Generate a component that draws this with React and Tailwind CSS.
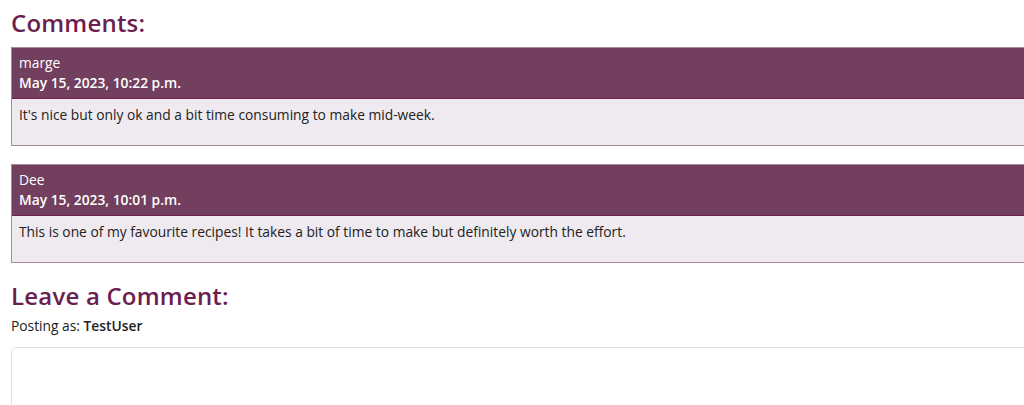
const comments = [
  {
    author: "marge",
    date: "May 15, 2023, 10:22 p.m.",
    body: "It's nice but only ok and a bit time consuming to make mid-week.",
  },
  {
    author: "Dee",
    date: "May 15, 2023, 10:01 p.m.",
    body: "This is one of my favourite recipes! It takes a bit of time to make but definitely worth the effort.",
  },
];

const App = () => {
  return (
    <div className="w-[1024px] h-[405px] overflow-hidden bg-white font-['Open_Sans',sans-serif] text-[13.8px] text-[#222]">
      <div className="w-[1100px] pl-[11px]">
        <h3 className="pt-[8px] pb-[9px] text-[24px] leading-[30px] font-semibold tracking-[0.2px] text-[#6b1e4f]">
          Comments:
        </h3>
        {comments.map((c) => (
          <div key={c.author} className="mb-[18px] border border-[#a58a9b]">
            <div className="bg-[#733f5e] text-white px-[7px] py-[5px] leading-[20px] border-b border-[#6b1e4f]">
              <p className="font-medium">{c.author}</p>
              <p className="font-semibold">{c.date}</p>
            </div>
            <div className="bg-[#efeaef] px-[7px] pt-[6px] pb-[20px] leading-[20px]">
              <p>{c.body}</p>
            </div>
          </div>
        ))}
        <h3 className="pb-[5px] text-[24px] leading-[30px] font-semibold tracking-[0.2px] text-[#6b1e4f]">
          Leave a Comment:
        </h3>
        <p className="leading-[20px]">
          Posting as: <strong className="font-semibold">TestUser</strong>
        </p>
        <textarea className="mt-[11px] w-[1040px] h-[120px] rounded-[6px] border border-[#dee2e6] resize-none" />
      </div>
    </div>
  );
};

export default App;
